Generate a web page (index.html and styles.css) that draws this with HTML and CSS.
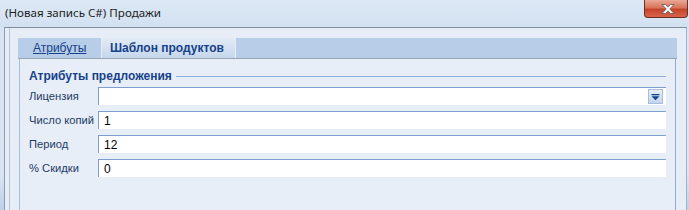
FILE: index.html
```html
<!DOCTYPE html>
<html lang="ru">
<head>
<meta charset="utf-8">
<title>Продажи</title>
<link rel="stylesheet" href="styles.css">
</head>
<body>
<div class="window">
  <div class="titlebar">
    <span class="title">(Новая запись C#) Продажи</span>
    <div class="close">
      <svg width="14" height="10" viewBox="0 0 14 10"><path d="M1 0.5h3.5l2.5 2.6l2.5-2.6h3.5l-4.2 4.5l4.2 4.5h-3.5l-2.5-2.6l-2.5 2.6h-3.5l4.2-4.5z" fill="#fff" stroke="#6b5c5a" stroke-width="0.9"/></svg>
    </div>
  </div>
  <div class="frame">
    <div class="client">
      <div class="inner">
        <div class="tabs">
          <div class="strip">
            <div class="tab"><span class="link">Атрибуты</span></div>
            <div class="tab active">Шаблон продуктов</div>
          </div>
          <div class="page">
            <div class="group-title"><span>Атрибуты предложения</span><div class="rule"></div></div>
            <div class="rows">
              <div class="row"><span class="label">Лицензия</span><div class="field combo"><span class="value"></span><div class="dd"><svg width="9" height="7" viewBox="0 0 9 7"><rect x="0.5" y="0" width="8" height="1.3" fill="#15428b"/><path d="M0.5 2.3h8l-4 4z" fill="#15428b"/></svg></div></div></div>
              <div class="row"><span class="label">Число копий</span><div class="field"><span class="value">1</span></div></div>
              <div class="row"><span class="label">Период</span><div class="field"><span class="value">12</span></div></div>
              <div class="row"><span class="label">% Скидки</span><div class="field"><span class="value">0</span></div></div>
            </div>
          </div>
        </div>
      </div>
    </div>
  </div>
</div>
</body>
</html>
```
FILE: styles.css
```css
* { box-sizing: border-box; }
html, body { margin: 0; padding: 0; }
body {
  width: 689px;
  height: 210px;
  overflow: hidden;
  background: #d7e4f3;
  font-family: "Liberation Sans", Arial, sans-serif;
}
.window {
  display: flex;
  flex-direction: column;
  height: 210px;
}
.titlebar {
  height: 27px;
  display: flex;
  align-items: flex-start;
  background: linear-gradient(to bottom, #dce8f5, #d2e1f1);
}
.title {
  font-family: "Noto Sans", "Open Sans", sans-serif;
  font-size: 11.6px;
  color: #1e1e1e;
  padding: 5px 0 0 5px;
  line-height: 16px;
}
.close {
  margin-left: auto;
  margin-right: 1px;
  width: 44px;
  height: 18px;
  border: 1px solid #6e2e24;
  border-top: none;
  border-radius: 0 0 4px 4px;
  background: linear-gradient(to bottom, #e9a896 0%, #d9745c 45%, #c4442b 55%, #d8654a 100%);
  display: flex;
  align-items: center;
  justify-content: center;
  padding-left: 4px;
}
.frame {
  flex: 1;
  padding: 0 2px 0 4px;
  background: linear-gradient(to bottom, #d9e5f3 80%, #bcd0e9);
  display: flex;
}
.client {
  flex: 1;
  border-left: 1px solid #8e9cad;
  border-top: 1px solid #7f8fa1;
  border-right: 1px solid #9fb4cf;
  background: #e6edf6;
  padding-left: 4px;
  display: flex;
}
.inner {
  flex: 1;
  border-left: 1px solid #b4c6dd;
  padding: 10px 9px 0 8px;
  display: flex;
}
.tabs {
  flex: 1;
  display: flex;
  flex-direction: column;
}
.strip {
  height: 21px;
  background: #b8cde7;
  display: flex;
  padding-left: 1px;
  border-bottom: 1px solid #9ba5b1;
}
.tab {
  height: 20px;
  font-size: 12px;
  line-height: 20px;
  color: #15428b;
  padding: 0 0 0 14px;
  width: 83px;
  background: #b8cde7;
  border-right: 1px solid #e4ecf6;
  white-space: nowrap;
}
.link { text-decoration: underline; }
.tab.active {
  width: 134px;
  padding-left: 8px;
  font-weight: bold;
  background: linear-gradient(to bottom, #e2ebf6, #c6d7ec);
  border-right: 1px solid #e6eef8;
}
.page {
  flex: 1;
  margin-left: 1px;
  margin-right: 1px;
  border-left: 1px solid #a9bdd6;
  border-right: 1px solid #8fabd3;
  background: #e8eef7;
  padding: 10px 9px 0 9px;
}
.group-title {
  display: flex;
  align-items: center;
  height: 14px;
  font-size: 12px;
  font-weight: bold;
  color: #15428b;
  white-space: nowrap;
}
.rule {
  flex: 1;
  height: 1px;
  background: #8fb0da;
  margin-left: 4px;
}
.rows {
  margin-top: 4px;
  display: flex;
  flex-direction: column;
  gap: 6px;
}
.row {
  display: flex;
  align-items: center;
  height: 18px;
}
.label {
  flex: none;
  width: 69px;
  font-size: 11.2px;
  color: #1d3b66;
  white-space: nowrap;
}
.field {
  flex: 1;
  height: 18px;
  background: #fff;
  border-top: 1px solid #7d9fcf;
  border-left: 1px solid #7d9fcf;
  display: flex;
  align-items: center;
  padding-left: 5px;
}
.value {
  flex: 1;
  font-size: 12px;
  color: #000;
}
.dd {
  width: 15px;
  height: 15px;
  margin-right: 3px;
  border: 1px solid #a5bedf;
  background: linear-gradient(to bottom, #e6eef8, #c3d5ec);
  display: flex;
  align-items: center;
  justify-content: center;
  padding-top: 2px;
}
```
